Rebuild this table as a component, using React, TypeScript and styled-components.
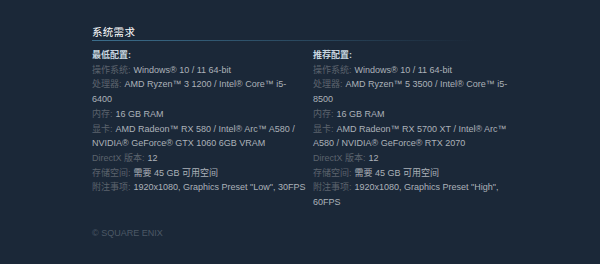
import React from "react";
import styled, { createGlobalStyle } from "styled-components";

const Global = createGlobalStyle`
  html, body { margin: 0; padding: 0; background: #1b2838; }
  body { width: 600px; height: 264px; overflow: hidden; }
`;

const Page = styled.div`
  width: 600px;
  height: 264px;
  box-sizing: border-box;
  padding: 25px 0 0 92px;
  background: #1b2838;
  font-family: Arial, "Liberation Sans", "Noto Sans CJK SC", sans-serif;
`;

const Title = styled.h2`
  margin: 0;
  font-size: 10.5px;
  font-weight: normal;
  line-height: 15px;
  color: #ffffff;
  letter-spacing: 0.3px;
`;

const Rule = styled.div`
  width: 426px;
  height: 1px;
  margin: 0 0 7px;
  background: linear-gradient(to right, #3b6e8c 0%, rgba(59, 110, 140, 0) 90%);
`;

const Columns = styled.div`
  display: grid;
  grid-template-columns: 221px 205px;
`;

const Column = styled.div`
  font-size: 9px;
  line-height: 14.7px;
  color: #acb2b8;
`;

const ColHead = styled.div`
  font-weight: bold;
  color: #c6d4df;
`;

const List = styled.ul`
  list-style: none;
  margin: 0;
  padding: 0;
`;

const Item = styled.li`
  margin: 0;
  white-space: pre-line;
`;

const Label = styled.span`
  color: #5b636d;
  margin-right: 3px;
`;

const Copyright = styled.div`
  margin-top: 17px;
  font-size: 9px;
  line-height: 12px;
  color: #4c5866;
`;

type Row = [string, string];

const minReq: Row[] = [
  ["操作系统:", "Windows® 10 / 11 64-bit"],
  ["处理器:", "AMD Ryzen™ 3 1200 / Intel® Core™ i5-\n6400"],
  ["内存:", "16 GB RAM"],
  ["显卡:", "AMD Radeon™ RX 580 / Intel® Arc™ A580 /\nNVIDIA® GeForce® GTX 1060 6GB VRAM"],
  ["DirectX 版本:", "12"],
  ["存储空间:", "需要 45 GB 可用空间"],
  ["附注事项:", "1920x1080, Graphics Preset \"Low\", 30FPS"],
];

const recReq: Row[] = [
  ["操作系统:", "Windows® 10 / 11 64-bit"],
  ["处理器:", "AMD Ryzen™ 5 3500 / Intel® Core™ i5-\n8500"],
  ["内存:", "16 GB RAM"],
  ["显卡:", "AMD Radeon™ RX 5700 XT / Intel® Arc™\nA580 / NVIDIA® GeForce® RTX 2070"],
  ["DirectX 版本:", "12"],
  ["存储空间:", "需要 45 GB 可用空间"],
  ["附注事项:", "1920x1080, Graphics Preset \"High\",\n60FPS"],
];

const ReqColumn = ({ head, rows }: { head: string; rows: Row[] }) => (
  <Column>
    <ColHead>{head}</ColHead>
    <List>
      {rows.map(([k, v]) => (
        <Item key={k}>
          <Label>{k}</Label>
          {v}
        </Item>
      ))}
    </List>
  </Column>
);

export default function App() {
  return (
    <Page>
      <Global />
      <Title>系统需求</Title>
      <Rule />
      <Columns>
        <ReqColumn head="最低配置:" rows={minReq} />
        <ReqColumn head="推荐配置:" rows={recReq} />
      </Columns>
      <Copyright>© SQUARE ENIX</Copyright>
    </Page>
  );
}
